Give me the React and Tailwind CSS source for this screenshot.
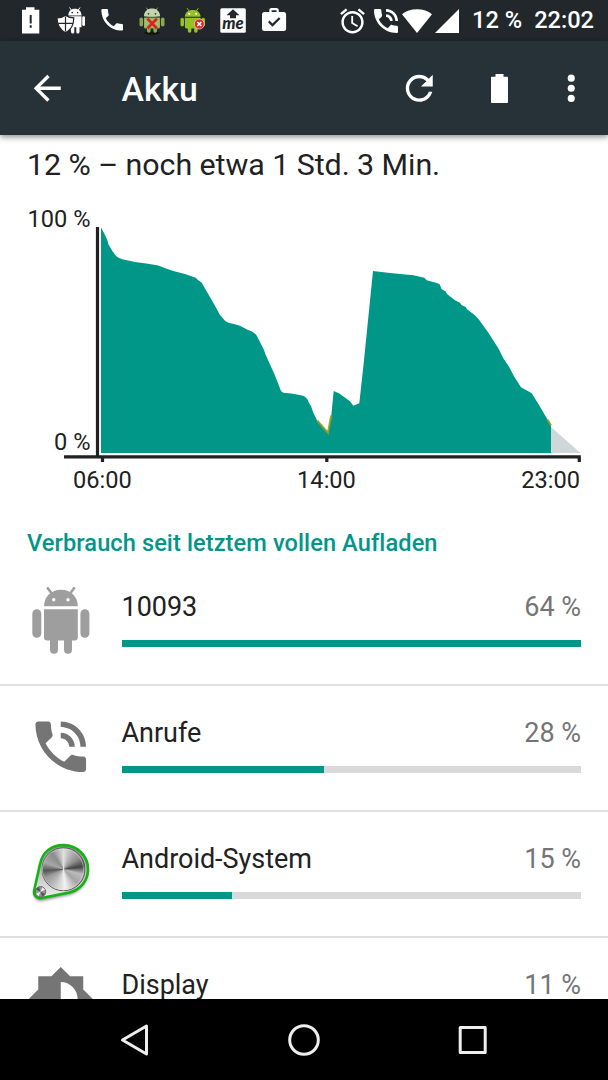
import React from 'react';

const LEVEL_POINTS = [
  [101, 27.5], [104, 33], [107.3, 40], [108.3, 44], [112, 50.5], [116, 56], [119, 58], [123.3, 59.5],
  [135, 62], [148, 63.7], [158.3, 65.5], [166, 68.5], [173.3, 71], [185, 74], [195.7, 77.7], [198, 80],
  [201.7, 82.7], [207, 92], [214, 104], [220, 115], [225, 120.7], [228.3, 122.7], [234, 124], [240, 125.7],
  [247, 129.5], [252, 131.5], [256, 134.5], [257.3, 136.7], [264, 150], [265.3, 154], [275, 175.5], [281, 191],
  [283.3, 192.7], [291, 193.4], [298.3, 194.7], [304, 196], [307.3, 199], [309, 203], [311, 206], [313.3, 212.7],
  [317.3, 220.7], [328.3, 233.3], [331.3, 215.3], [333.7, 191], [339.3, 193.6], [350, 201.3], [353.3, 205.7],
  [359.3, 203.3], [363.5, 165], [373, 71], [390, 73], [413.3, 75.3], [424.3, 77.7], [426.7, 80.3], [436, 82.7],
  [439.7, 84.3], [441.5, 89], [445.7, 91.5], [447, 94], [455, 100.3], [460, 102.7], [461.5, 105], [465.7, 107],
  [467, 109.3], [474, 114.5], [478.3, 118.7], [487.7, 131.7], [498.3, 148.3], [503.3, 158.3], [509, 166.7],
  [514.3, 176.7], [521, 187.3], [531.7, 193.3], [539, 205], [547.3, 219.3], [551, 225.7],
];

const APPS = [
  { name: '10093', percent: 64, bar: 100, Icon: AndroidIcon },
  { name: 'Anrufe', percent: 28, bar: 44.1, Icon: CallIcon },
  { name: 'Android-System', percent: 15, bar: 24, Icon: KnobIcon },
  { name: 'Display', percent: 11, bar: 17, Icon: DisplayIcon },
];

const PHONE_PATH = 'M6.62 10.79c1.44 2.83 3.76 5.14 6.59 6.59l2.2-2.2c.27-.27.67-.36 1.02-.24 1.12.37 2.33.57 3.57.57.55 0 1 .45 1 1V20c0 .55-.45 1-1 1-9.39 0-17-7.61-17-17 0-.55.45-1 1-1h3.5c.55 0 1 .45 1 1 0 1.25.2 2.45.57 3.57.11.35.03.74-.25 1.02l-2.2 2.2z';
const TALK_PATH = 'M20 15.5c-1.25 0-2.45-.2-3.57-.57-.35-.11-.74-.03-1.02.24l-2.2 2.2c-2.83-1.44-5.15-3.75-6.59-6.58l2.2-2.21c.28-.27.36-.66.25-1.01C8.7 6.45 8.5 5.25 8.5 4c0-.55-.45-1-1-1H4c-.55 0-1 .45-1 1 0 9.39 7.61 17 17 17 .55 0 1-.45 1-1v-3.5c0-.55-.45-1-1-1zM19 12h2c0-4.97-4.03-9-9-9v2c3.87 0 7 3.13 7 7zm-4 0h2c0-2.76-2.24-5-5-5v2c1.66 0 3 1.34 3 3z';

function AndroidIcon() {
  return (
    <svg viewBox="0 0 67.5 67.5" className="size-[67.5px]" fill="#9e9e9e">
      <path d="M17 19.3C17 10 24 2.7 34 2.7s16.8 7.3 16.8 16.6z" />
      <path d="M20.800 1.200l4.500 6M47 1.200l-4.500 6" stroke="#9e9e9e" strokeWidth="2.600" strokeLinecap="round" />
      <circle cx="26.700" cy="12.700" r="1.700" fill="#fff" />
      <circle cx="41" cy="12.700" r="1.700" fill="#fff" />
      <path d="M17 22.300h33.800V50.500a3 3 0 0 1-3 3H45v9.300a4 4 0 0 1-8 0v-9.300h-6v9.300a4 4 0 0 1-8 0v-9.300h-3a3 3 0 0 1-3-3z" />
      <rect x="5.300" y="22.300" width="9" height="28.500" rx="4.500" />
      <rect x="53.400" y="22.300" width="9" height="28.500" rx="4.500" />
    </svg>
  );
}

function CallIcon() {
  return (
    <svg viewBox="0 0 24 24" className="size-[67.5px]" fill="#757575">
      <path d={TALK_PATH} />
    </svg>
  );
}

function DisplayIcon() {
  return (
    <svg viewBox="0 0 24 24" className="size-[67.5px]" fill="#757575">
      <path d="M20 15.31L23.31 12 20 8.69V4h-4.69L12 .69 8.69 4H4v4.69L.69 12 4 15.31V20h4.69L12 23.31 15.31 20H20v-4.69zM12 18V6c3.31 0 6 2.69 6 6s-2.69 6-6 6z" />
    </svg>
  );
}

function KnobIcon() {
  return (
    <svg viewBox="0 0 67.5 67.5" className="size-[67.5px]">
      <defs>
        <linearGradient id="plate" x1="0" y1="0" x2="0" y2="1">
          <stop offset="0" stopColor="#8f8f8f" />
          <stop offset="1" stopColor="#f0f0f0" />
        </linearGradient>
        <filter id="soft" x="-20%" y="-20%" width="140%" height="140%">
          <feGaussianBlur stdDeviation="1.6" />
        </filter>
      </defs>
      <g transform="translate(-0.500 1.300)">
        <path d="M13.500 23C17 11 26 4.500 37 4.500c14 0 24.500 11 24.500 24.500 0 12-8.500 22-20 24L16 58.500c-6 1-9-3-8-8z" fill="#222" opacity=".6" filter="url(#soft)" transform="translate(0 1.800)" />
        <path d="M13.500 24C16 11.500 25 4.800 37 4.800c14 0 24.500 11 24.500 24.400 0 11.500-8 20.500-19 23L15 57.700c-5.500.8-8.300-3-7.300-7.700z" fill="url(#plate)" stroke="#12b512" strokeWidth="2.600" />
        <foreignObject x="14.500" y="7" width="44" height="44">
          <div className="size-[44px] rounded-full border border-[#555] bg-[conic-gradient(#e0e0e0_0deg,#b5b5b5_25deg,#8c8c8c_55deg,#444_82deg,#bbb_105deg,#a5a5a5_135deg,#f2f2f2_175deg,#bbb_215deg,#999_245deg,#555_266deg,#a8a8a8_290deg,#8c8c8c_325deg,#e0e0e0_360deg)]" />
        </foreignObject>
        <circle cx="36.500" cy="29" r="20.500" fill="none" stroke="#ddd" strokeOpacity=".5" strokeWidth="1" />
        <circle cx="14" cy="51.500" r="5.200" fill="#999" stroke="#666" strokeWidth="1" />
        <path d="M14 51.500l-4.500-2a5 5 0 0 1 3-2.800zM14 51.500l4.500 2a5 5 0 0 1-3 2.800z" fill="#555" />
        <path d="M14 51.500l2-4.500 2.600 2.500zM14 51.500l-2 4.500-2.500-2.500z" fill="#eee" />
      </g>
    </svg>
  );
}

function StatusSlot({ children }) {
  return (
    <div className="flex w-[40.5px] justify-center">
      <svg viewBox="0 0 28 28" className="size-7 shrink-0" fill="#fff">{children}</svg>
    </div>
  );
}

// small green robot, shared by the two debug notifications
function Robot({ color }) {
  return (
    <g fill={color}>
      <path d="M6 9.500C6 5 9.500 2.500 14 2.500s8 2.500 8 7z" />
      <path d="M8.500 1l2 3M19.500 1l-2 3" stroke={color} strokeWidth="1" strokeLinecap="round" />
      <path d="M6 10.500h16V20a1.500 1.500 0 0 1-1.500 1.500H19V24a1.800 1.800 0 0 1-3.600 0v-2.500h-2.800V24A1.800 1.800 0 0 1 9 24v-2.500H7.500A1.500 1.500 0 0 1 6 20z" />
      <rect x="1.500" y="10.500" width="3.600" height="9" rx="1.800" />
      <rect x="22.900" y="10.500" width="3.600" height="9" rx="1.800" />
    </g>
  );
}

function StatusBar() {
  return (
    <div className="flex h-[41px] shrink-0 items-center bg-[#21272b] pl-[10.5px] text-white">
      <StatusSlot>
        <path fillRule="evenodd" d="M9 0.300h8.500V2.700h4.800V26.500H5V2.700h4zM12.700 8v8.500h2V8zM12.700 18.300v2.400h2v-2.400z" />
      </StatusSlot>
      <StatusSlot>
        <path d="M11.300 8.500C11.500 4 14 1.800 17.800 1.800S24.300 4 24.500 8.500z" />
        <path d="M12.800 0.800l2 3M22.800 0.800l-2 3" stroke="#fff" strokeWidth="1" strokeLinecap="round" />
        <path d="M12 9.300h12.500v10.900h-2V25a1.600 1.600 0 0 1-3.200 0v-4.800h-2V25a1.600 1.600 0 0 1-3.200 0z" />
        <rect x="25.200" y="9.300" width="2.900" height="9.700" rx="1.450" />
        <path d="M8.500 8.200c2.500 2 5 2.600 8.300 2.600 0 6.700-1.800 11.600-8.300 14.900C2 22.400 0 17.500 0 10.800c3.300 0 6-.6 8.500-2.600z" stroke="#21272b" strokeWidth="1.200" />
        <path d="M8.500 9.500v15M1 16.300h15" stroke="#21272b" strokeWidth="1.200" />
        <circle cx="15.200" cy="5.600" r="0.800" fill="#21272b" />
        <circle cx="20.600" cy="5.600" r="0.800" fill="#21272b" />
      </StatusSlot>
      <StatusSlot>
        <path d={PHONE_PATH} transform="translate(-0.200 -1.600) scale(1.200)" />
      </StatusSlot>
      <StatusSlot>
        <ellipse cx="14" cy="26" rx="8" ry="1.700" fill="#11170f" />
        <Robot color="#8aa84c" />
        <path d="M6 9C6.300 4 9.500 1.500 14 1.500S21.700 4 22 9c-4 1-12 1-16 0z" fill="#c5d3ae" />
        <path d="M6.500 11.500h15v9h-15z" fill="#a3bd70" />
        <circle cx="10.500" cy="6.800" r="0.900" fill="#3b4b2a" />
        <circle cx="17.500" cy="6.800" r="0.900" fill="#3b4b2a" />
        <path d="M9.500 11.800l9.400 9.400M18.900 11.800l-9.400 9.400" stroke="#d5281f" strokeWidth="2.800" />
      </StatusSlot>
      <StatusSlot>
        <g transform="translate(0 .5) scale(.98)">
          <Robot color="#97c024" />
          <circle cx="10.500" cy="6.500" r="1.100" fill="#fff" />
          <circle cx="17.500" cy="6.500" r="1.100" fill="#fff" />
        </g>
        <circle cx="20.300" cy="17" r="5" fill="#d92b2b" stroke="#f2c9c9" strokeWidth="0.800" />
        <path d="M18.300 15l4 4M22.300 15l-4 4" stroke="#fff" strokeWidth="1.600" />
      </StatusSlot>
      <StatusSlot>
        <rect x="1.300" y="1.200" width="25.500" height="24.600" rx="1.500" />
        <path d="M14 2.300l6.500 6h-3.500v3h-6v-3H7.500z" fill="#21272b" />
        <text x="14" y="22.200" textAnchor="middle" textLength="21.500" lengthAdjust="spacingAndGlyphs" fontFamily="Lato, sans-serif" fontStyle="italic" fontWeight="900" fontSize="17" fill="#21272b">me</text>
      </StatusSlot>
      <StatusSlot>
        <path fillRule="evenodd" d="M4.300 5h5V3.200c0-1.300 1-2.200 2.200-2.200h5c1.300 0 2.300 1 2.300 2.200V5h5c1.300 0 2.300 1 2.300 2.300v14.500c0 1.300-1 2.300-2.300 2.300H4.300c-1.300 0-2.300-1-2.300-2.300V7.300C2 6 3 5 4.300 5zM11.600 3.200V5h4.900V3.200zM12.500 19.800l8-8-1.600-1.600-6.400 6.400-3-3L8 15.200z" />
      </StatusSlot>
      <div className="ml-auto flex items-center pr-[14px]">
        <svg viewBox="2 1.500 20 21" className="mr-[9px] h-[26px] w-[25px]" fill="#fff">
          <path d="M22 5.720l-4.600-3.860-1.290 1.530 4.600 3.860L22 5.720zM7.880 3.390L6.600 1.860 2 5.710l1.290 1.530 4.590-3.850zM12.500 8H11v6l4.750 2.850.75-1.230-4-2.370V8zM12 4c-4.970 0-9 4.030-9 9s4.020 9 9 9c4.970 0 9-4.030 9-9s-4.030-9-9-9zm0 16c-3.870 0-7-3.130-7-7s3.130-7 7-7 7 3.130 7 7-3.130 7-7 7z" />
        </svg>
        <svg viewBox="3 3 18 18" className="mr-1 size-6" fill="#fff">
          <path d={TALK_PATH} />
        </svg>
        <svg viewBox="0 0 30 24" className="mr-[3px] h-6 w-[30px]" fill="#fff">
          <path d="M0 5.200C4 1.800 9 .2 15 .2s11 1.600 15 5L15 24z" />
        </svg>
        <svg viewBox="0 0 24 24" className="mr-[13px] size-6" fill="#fff">
          <path d="M0 24L24 0v24z" />
        </svg>
        <span className="mr-3 pt-px text-[23.6px] leading-none font-medium">12 %</span>
        <span className="pt-px text-[23.6px] leading-none font-medium">22:02</span>
      </div>
    </div>
  );
}

function AppBar() {
  return (
    <header className="z-10 flex h-[94px] shrink-0 items-center bg-[#263238] pr-[17px] pl-[27px] text-white shadow-[0_2px_6px_rgba(0,0,0,0.45)]">
      <svg viewBox="0 0 24 24" className="size-[40.5px]" fill="#fff">
        <path d="M20 11H7.830l5.590-5.590L12 4l-8 8 8 8 1.410-1.410L7.830 13H20v-2z" />
      </svg>
      <h1 className="ml-[54px] flex-1 pt-[3px] text-[33.75px] leading-none font-medium">Akku</h1>
      <svg viewBox="0 0 24 24" className="size-[40.5px]" fill="#fff">
        <path d="M17.650 6.350C16.200 4.900 14.210 4 12 4c-4.420 0-7.990 3.580-7.990 8s3.570 8 7.990 8c3.730 0 6.840-2.550 7.730-6h-2.080c-.82 2.330-3.040 4-5.650 4-3.310 0-6-2.690-6-6s2.690-6 6-6c1.660 0 3.140.69 4.220 1.780L13 11h7V4l-2.350 2.350z" />
      </svg>
      <svg viewBox="0 0 17 29" className="ml-[51px] h-[29px] w-[17px]" fill="#fff">
        <path d="M4.500 0h8v2.700H16c.6 0 1 .4 1 1V28c0 .6-.4 1-1 1H1c-.6 0-1-.4-1-1V3.700c0-.6.4-1 1-1h3.500z" />
      </svg>
      <svg viewBox="0 0 24 24" className="ml-[43px] size-[40.5px]" fill="#fff">
        <circle cx="12" cy="6" r="2.100" />
        <circle cx="12" cy="12" r="2.100" />
        <circle cx="12" cy="18" r="2.100" />
      </svg>
    </header>
  );
}

function HistoryChart() {
  const line = LEVEL_POINTS.map(([x, y]) => `${x} ${y}`).join('L');
  return (
    <svg viewBox="0 0 608 300" className="block h-[300px] w-[608px] text-[23.6px]">
      <path d={`M101 253L${line}L551 253z`} fill="#009688" />
      <path d="M551 227v26h29.500z" fill="#cfd8d9" />
      <path d="M317.300 220.700L328 233l3.300-17.500M547.300 219.500l3.700 6" fill="none" stroke="#8a9a1c" strokeOpacity=".85" strokeWidth="2.200" />
      <path d="M97.500 27v230M64 256.800h516.800M102.500 257v5M326.800 257v5M579.300 257v5" stroke="#212121" strokeWidth="3.200" />
      <g fill="#212121">
        <text x="90.500" y="27" textAnchor="end">100 %</text>
        <text x="90.500" y="250" textAnchor="end">0 %</text>
        <text x="102.300" y="288" textAnchor="middle">06:00</text>
        <text x="326.500" y="288" textAnchor="middle">14:00</text>
        <text x="580" y="288" textAnchor="end">23:00</text>
      </g>
    </svg>
  );
}

function UsageRow({ name, percent, bar, Icon }) {
  return (
    <li className="flex h-[126px] shrink-0 border-b-2 border-[#e0e0e0] pt-[27px] pr-[27px] pl-[27px]">
      <Icon />
      <div className="ml-[27px] flex-1">
        <div className="flex justify-between pt-[4px] text-[27px] leading-[32px] tracking-[-0.03px]">
          <span className="text-[#212121]">{name}</span>
          <span className="text-[#757575]">{percent} %</span>
        </div>
        <div className="mt-[17px] h-[7px] bg-[#d9d9d9]">
          <div className="h-full bg-[#009688]" style={{ width: `${bar}%` }} />
        </div>
      </div>
    </li>
  );
}

function NavBar() {
  return (
    <nav className="flex h-[81px] shrink-0 items-center justify-center gap-[129px] bg-black">
      <svg viewBox="0 0 40 40" className="size-10" fill="none" stroke="#eee" strokeWidth="3" strokeLinejoin="round">
        <path d="M31.500 6v28L7.500 20z" />
      </svg>
      <svg viewBox="0 0 40 40" className="size-10" fill="none" stroke="#eee" strokeWidth="3">
        <circle cx="20" cy="20" r="14.300" />
      </svg>
      <svg viewBox="0 0 40 40" className="size-10" fill="none" stroke="#eee" strokeWidth="3" strokeLinejoin="round">
        <rect x="7.200" y="7.500" width="25" height="25" />
      </svg>
    </nav>
  );
}

export default function App() {
  return (
    <div className="flex h-[1080px] w-[608px] flex-col overflow-hidden bg-white font-[Roboto,sans-serif]">
      <StatusBar />
      <AppBar />
      <main className="min-h-0 flex-1 overflow-hidden">
        <p className="h-[65px] pt-[11px] pl-[27px] text-[30.4px] leading-[38px] tracking-[-0.06px] text-[#212121]">12 % – noch etwa 1 Std. 3 Min.</p>
        <HistoryChart />
        <h2 className="h-[60px] pt-[28px] pl-[27px] text-[23.6px] leading-[30px] font-medium tracking-[0.09px] text-[#009688]">
          Verbrauch seit letztem vollen Aufladen
        </h2>
        <ul>
          {APPS.map((app) => (
            <UsageRow key={app.name} {...app} />
          ))}
        </ul>
      </main>
      <NavBar />
    </div>
  );
}
